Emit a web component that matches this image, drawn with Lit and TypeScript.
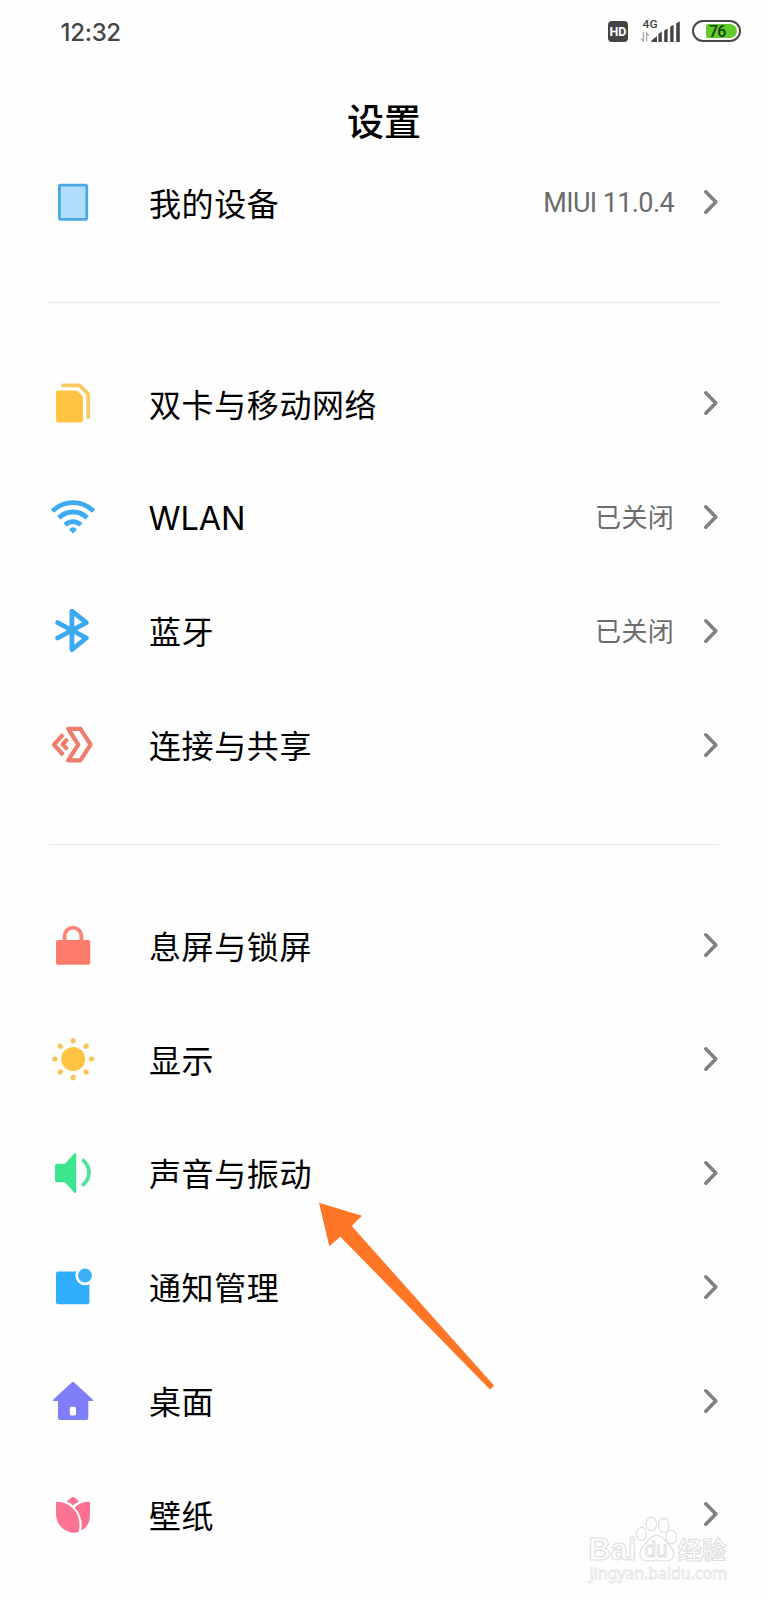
import { LitElement, html, svg, css, nothing, TemplateResult } from "lit";
import { customElement, property } from "lit/decorators.js";

const SUN_DOTS = Array.from({ length: 8 }, (_, i) => i * 45);

const ICONS: Record<string, TemplateResult> = {
  device: svg`<rect x="12.4" y="9.1" width="27.4" height="34.2" rx="1.4" fill="#b1ddfc" stroke="#4aa9e4" stroke-width="2.8"/>`,
  sim: svg`
    <path d="M11 13.4H30L36 19.6V43.4a2 2 0 0 1-2 2H11a2 2 0 0 1-2-2V15.4a2 2 0 0 1 2-2Z" fill="#ffc444"/>
    <path d="M16 8.4H32.6L41.2 17V40" fill="none" stroke="#f7ca62" stroke-width="3.8" stroke-linecap="round" stroke-linejoin="round"/>`,
  wifi: svg`
    <g fill="none" stroke="#3dabef" stroke-width="4.8">
      <path d="M5.4 21Q14.5 12.6 26 12.6T46.6 21"/>
      <path d="M11.8 27.8Q18 22 26 22T40.2 27.8"/>
      <path d="M18 34.8Q21.6 31.6 26 31.6T34 34.8"/>
    </g>
    <path d="M22.4 38.9Q26 35.8 29.6 38.9Q29.8 40.1 26 43.4Q22.2 40.1 22.4 38.9Z" fill="#3dabef"/>`,
  bluetooth: svg`<path d="M10.6 18.6L39.4 34L24.9 45.6V7.2L39.4 18.6L10.6 34" fill="none" stroke="#3ba9f0" stroke-width="4.8" stroke-linecap="round" stroke-linejoin="round"/>`,
  share: svg`
    <g fill="none" stroke="#ee7d6b" stroke-width="4.2" stroke-linejoin="round">
      <path d="M21.2 10.8H33.4L43.6 26.6L33.4 42.4H21.2L31.3 26.6Z"/>
      <path d="M16.2 16.4L7 26.6L16.2 37"/>
      <path d="M20.6 21L15.5 26.4L20.4 31.4"/>
    </g>`,
  lock: svg`
    <rect x="9" y="21" width="34.2" height="24.8" rx="2" fill="#fd7b68"/>
    <path d="M17.6 22V17.2a8.4 8.6 0 0 1 16.8 0V22" fill="none" stroke="#fb8576" stroke-width="3.9"/>`,
  sun: svg`
    <circle cx="26.2" cy="26.1" r="12" fill="#ffc341"/>
    ${SUN_DOTS.map((a) => svg`<ellipse cx="26.2" cy="7.8" rx="2.5" ry="2.8" fill="#f6c555" transform="rotate(${a} 26.2 26.1)"/>`)}`,
  sound: svg`
    <path d="M10 17.8H18L27.2 7.4Q29.2 6 29.2 8.4V45.8Q29.2 48 27.2 46.4L18 36.2H10a2 2 0 0 1-2-2V19.8a2 2 0 0 1 2-2Z" fill="#3de68e"/>
    <path d="M35.2 13.6Q42 19 42 26.6T35.2 39.8" fill="none" stroke="#53e29b" stroke-width="3.8"/>`,
  notify: svg`
    <rect x="9" y="11.6" width="33.4" height="32.6" rx="2" fill="#30adfd"/>
    <circle cx="38" cy="15.6" r="9.6" fill="#fefefe"/>
    <circle cx="38" cy="15.6" r="7" fill="#3cb1fa"/>`,
  home: svg`
    <path fill-rule="evenodd" d="M25 8.2Q26 7.2 27 8.2L46.2 26Q46.6 27 45.6 27H41.3V44a2 2 0 0 1-2 2H13a2 2 0 0 1-2-2V27H6.4Q5.4 27 5.8 26ZM24.4 32.8a1.6 1.6 0 0 0-1.6 1.6V40a1.6 1.6 0 0 0 1.6 1.6H27.4a1.6 1.6 0 0 0 1.6-1.6V34.4a1.6 1.6 0 0 0-1.6-1.6Z" fill="#7f7df8"/>`,
  tulip: svg`
    <g fill="#fc7391">
      <path d="M9 13.8Q19 13.4 26 20.4Q34.8 29.4 31.6 44.2Q26 45.4 21 43.4Q9 38.6 9 25Z"/>
      <path d="M43 13.8Q33.8 13.4 27.6 19.4Q36.4 29 34.4 42.6Q43 38.4 43 26Z"/>
      <path d="M19.8 13.4L24.8 9.3Q26 8.4 27.2 9.3L32.2 13.4Q28.8 14.6 26.2 17.4Q23 14.6 19.8 13.4Z"/>
    </g>`,
};

interface Item {
  icon: string;
  label: string;
  value?: string;
}

const GROUPS: Item[][] = [
  [{ icon: "device", label: "我的设备", value: "MIUI 11.0.4" }],
  [
    { icon: "sim", label: "双卡与移动网络" },
    { icon: "wifi", label: "WLAN", value: "已关闭" },
    { icon: "bluetooth", label: "蓝牙", value: "已关闭" },
    { icon: "share", label: "连接与共享" },
  ],
  [
    { icon: "lock", label: "息屏与锁屏" },
    { icon: "sun", label: "显示" },
    { icon: "sound", label: "声音与振动" },
    { icon: "notify", label: "通知管理" },
    { icon: "home", label: "桌面" },
    { icon: "tulip", label: "壁纸" },
  ],
];

const isLatin = (text: string) => /^[\x00-\x7f]+$/.test(text);

@customElement("status-bar")
class StatusBar extends LitElement {
  static styles = css`
    :host {
      display: flex;
      align-items: center;
      justify-content: space-between;
      height: 62px;
      padding: 0 27px 0 60.5px;
      color: #454545;
    }
    .time {
      font: 500 24px/30px Inter, "Noto Sans", sans-serif;
      letter-spacing: -0.3px;
      padding-top: 4px;
    }
    .indicators { display: flex; align-items: center; }
    .hd {
      width: 20px;
      height: 21px;
      border-radius: 4px;
      background: #444;
      color: #fff;
      font: 700 12.5px/21px Roboto, sans-serif;
      text-align: center;
    }
    .signal { width: 42px; height: 26px; margin: 0 11px 0 11px; overflow: visible; }
    .net { font: 500 11.5px Roboto, sans-serif; fill: #444; }
    .battery {
      box-sizing: border-box;
      width: 49px;
      height: 22px;
      border: 2.4px solid #484848;
      border-radius: 11px;
      display: flex;
      align-items: center;
      justify-content: flex-end;
      padding-right: 2px;
    }
    .level {
      width: 31px;
      height: 14px;
      border-radius: 2px 7px 7px 2px;
      background: #63cb2b;
      color: #16420a;
      font: 500 16px/15px Roboto, sans-serif;
      letter-spacing: -0.8px;
      padding-left: 3px;
      box-sizing: border-box;
    }
  `;
  render() {
    return html`
      <div class="time">12:32</div>
      <div class="indicators">
        <div class="hd">HD</div>
        <svg class="signal" viewBox="0 0 42 26">
          <text class="net" x="3.6" y="10.4" textLength="15" lengthAdjust="spacingAndGlyphs">4G</text>
          <path d="M4.4 14V23L2 20.4M7.6 23.6V15L9.8 17.4" fill="none" stroke="#aaa" stroke-width="1.4"/>
          <path d="M12.4 24V22.6L18 18V24ZM19.4 24V16L22.8 13.6V24ZM25.2 24V12.4L28.6 10.4V24ZM31.2 24V8.8L34.6 6.8V24ZM37.2 24V5.2L40.8 3.4V24Z" fill="#444"/>
        </svg>
        <div class="battery"><div class="level">76</div></div>
      </div>
    `;
  }
}

@customElement("setting-row")
class SettingRow extends LitElement {
  @property({ attribute: false }) item!: Item;
  static styles = css`
    :host {
      display: flex;
      align-items: center;
      height: 113.8px;
      padding: 0 47px;
    }
    .icon { width: 52px; height: 52px; flex: none; }
    .label {
      flex: 1;
      margin-left: 50px;
      font: 400 32px/48px "Noto Sans CJK SC", sans-serif;
      letter-spacing: 0.6px;
      color: #000;
    }
    .label.latin {
      font: 400 32.5px/48px Inter, sans-serif;
      letter-spacing: -0.1px;
      padding-top: 5px;
      margin-left: 49.5px;
    }
    .value {
      font: 400 26px/40px "Noto Sans CJK SC", sans-serif;
      letter-spacing: 0.3px;
      color: #6c6c6c;
    }
    .value.latin {
      font: 400 27px/40px Roboto, sans-serif;
      letter-spacing: -0.6px;
      padding-top: 3px;
    }
    .chevron { width: 20px; height: 28px; margin-left: 27px; padding-top: 1px; flex: none; }
  `;
  render() {
    const { icon, label, value } = this.item;
    return html`
      <svg class="icon" viewBox="0 0 52 52">${ICONS[icon]}</svg>
      <span class="label ${isLatin(label) ? "latin" : ""}">${label}</span>
      ${value ? html`<span class="value ${isLatin(value) ? "latin" : ""}">${value}</span>` : nothing}
      <svg class="chevron" viewBox="0 0 20 28">
        <path d="M4.8 3.8L14.8 14L4.8 24.2" fill="none" stroke="#808080" stroke-width="3.6" stroke-linecap="round" stroke-linejoin="round"/>
      </svg>
    `;
  }
}

@customElement("app-root")
class AppRoot extends LitElement {
  static styles = css`
    :host {
      display: block;
      position: relative;
      height: 1600px;
      overflow: hidden;
      background: #fefefe;
    }
    .title {
      margin: 0;
      height: 83px;
      text-align: center;
      font: 500 37px/116px "Noto Sans CJK SC", sans-serif;
      color: #000;
    }
    .rule { height: 1px; margin: 43px 49px; background: #e9e9e9; }
    .arrow { position: absolute; left: 310px; top: 1195px; width: 195px; height: 205px; }
    .watermark { position: absolute; left: 580px; top: 1510px; width: 160px; height: 80px; }
    .mark { fill: #fefefe; stroke: #dedede; stroke-width: 1.1; }
    .brand { font: 700 31px "Liberation Sans", sans-serif; }
    .du { font: 400 22px "Liberation Sans", sans-serif; }
    .cn { font: 700 24px "Noto Sans CJK SC", sans-serif; }
    .url { font: 400 17px "Noto Sans", sans-serif; stroke: #e4e4e4; stroke-width: 0.8; }
  `;
  render() {
    return html`
      <status-bar></status-bar>
      <h1 class="title">设置</h1>
      ${GROUPS.map(
        (g, i) => html`
          ${i ? html`<div class="rule"></div>` : nothing}
          ${g.map((item) => html`<setting-row .item=${item}></setting-row>`)}
        `
      )}
      <svg class="arrow" viewBox="310 1195 195 205">
        <path d="M319 1202.7L362 1215.7L351.7 1226L494.2 1385.7L490 1389.5L340.3 1236.7L329.3 1246.2Z" fill="#ff7627"/>
      </svg>
      <svg class="watermark" viewBox="580 1510 160 80">
        <g class="mark">
          <text class="brand" x="588.5" y="1560" textLength="48" lengthAdjust="spacingAndGlyphs">Bai</text>
          <ellipse cx="641.5" cy="1534" rx="5.2" ry="6.6"/>
          <ellipse cx="651.3" cy="1524" rx="5.2" ry="7"/>
          <ellipse cx="663.6" cy="1525.4" rx="5.4" ry="7"/>
          <ellipse cx="671.2" cy="1537" rx="5.4" ry="6.8"/>
          <path d="M656.5 1535.5C650 1535.5 648 1541 643.5 1546C637.5 1552 639 1561 648 1561C652 1561 653 1560 656.5 1560C660 1560 662 1561 666 1561C675 1561 676 1552 670 1546C665 1541 663 1535.5 656.5 1535.5Z"/>
          <text class="du" x="644.5" y="1557" textLength="23" lengthAdjust="spacingAndGlyphs">du</text>
          <text class="cn" x="678" y="1558.5" textLength="48" lengthAdjust="spacingAndGlyphs">经验</text>
          <text class="url" x="589.5" y="1578.5" textLength="137.5" lengthAdjust="spacingAndGlyphs">jingyan.baidu.com</text>
        </g>
      </svg>
    `;
  }
}
